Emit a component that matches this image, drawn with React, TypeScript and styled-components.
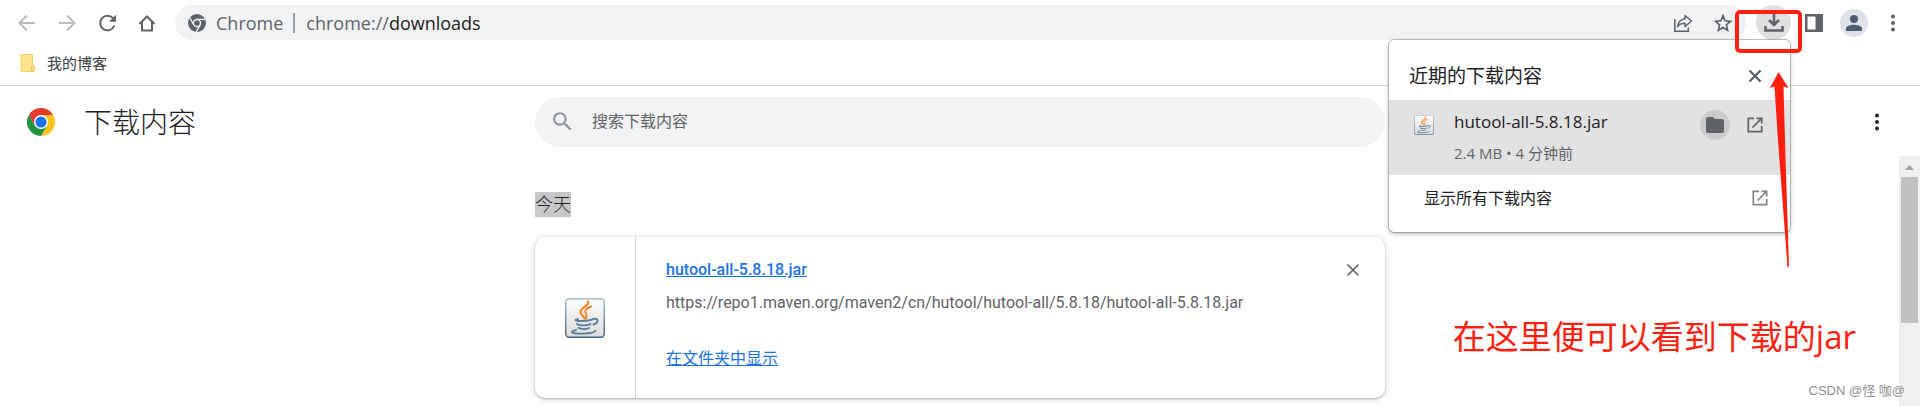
import React from "react";
import styled, { createGlobalStyle, css } from "styled-components";

const ui = `"Open Sans", "Noto Sans CJK SC", sans-serif`;
const web = `Roboto, "Noto Sans CJK SC", sans-serif`;

const GlobalStyle = createGlobalStyle`
  *, *::before, *::after { box-sizing: border-box; }
  body { margin: 0; background: #fff; color: #202124; font-family: ${web}; font-size: 16px; line-height: 24px; }
  button, input { font: inherit; color: inherit; margin: 0; padding: 0; border: 0; background: none; }
  button { cursor: pointer; }
  h1, h2, p { margin: 0; font-weight: 400; }
  svg { display: block; flex: none; }
`;

const Browser = styled.div`
  position: relative;
  display: flex;
  flex-direction: column;
  min-height: 100vh;
  overflow: hidden;
`;

const Toolbar = styled.nav`
  display: flex;
  align-items: center;
  height: 45px;
  padding: 0 10px 0 12px;
  color: #5f6368;
`;

const NavGroup = styled.div`
  display: flex;
  gap: 10px;
`;

const IconButton = styled.button<{ $size?: number; $fill?: string; $tone?: string }>`
  display: flex;
  flex: none;
  align-items: center;
  justify-content: center;
  width: ${(p) => p.$size ?? 30}px;
  height: ${(p) => p.$size ?? 30}px;
  border-radius: 50%;
  background: ${(p) => p.$fill ?? "transparent"};
  color: ${(p) => p.$tone ?? "#5f6368"};
`;

const Omnibox = styled.div`
  display: flex;
  flex: 1;
  align-items: center;
  height: 35px;
  margin: 0 10px 0 13px;
  padding: 0 8px 0 13px;
  border-radius: 18px;
  background: #f1f3f4;
  font: 18px/24px ${ui};
`;

const SiteChip = styled.span`
  margin-left: 10px;
  padding-right: 10px;
  border-right: 2px solid #9aa0a6;
  line-height: 20px;
`;

const Address = styled.a`
  flex: 1;
  margin-left: 11px;
  color: #5f6368;
  text-decoration: none;
  b { color: #202124; font-weight: 400; }
`;

const OmniActions = styled.div`
  display: flex;
  gap: 10px;
`;

const ToolGroup = styled.div`
  display: flex;
  align-items: center;
  gap: 5px;
`;

const Account = styled.div`
  display: flex;
  align-items: center;
  gap: 7px;
  padding-left: 4px;
`;

const Bookmarks = styled.nav`
  display: flex;
  align-items: center;
  height: 41px;
  padding: 0 20px 4px;
  border-bottom: 1px solid #d5d7da;
`;

const Bookmark = styled.button`
  display: flex;
  align-items: center;
  gap: 12px;
  color: #3c4043;
  font: 15px/20px ${ui};
`;

const Page = styled.div`
  display: grid;
  grid-template-columns: 1fr minmax(0, 850px) 1fr;
  flex: 1;
  grid-template-rows: 71px 1fr;
`;

const Brand = styled.header`
  display: flex;
  align-items: center;
  gap: 29px;
  padding-left: 27px;
`;

const Title = styled.h1`
  padding-top: 4px;
  font-size: 28px;
  font-weight: 300;
  line-height: 36px;
`;

const SearchBox = styled.label`
  display: flex;
  align-items: center;
  align-self: center;
  height: 50px;
  padding: 0 15px;
  gap: 17px;
  border-radius: 25px;
  background: #f1f3f4;
  color: #909397;
`;

const SearchInput = styled.input`
  flex: 1;
  min-width: 0;
  outline: 0;
  color: #202124;
  &::placeholder { color: #5f6368; opacity: 1; }
`;

const PageMenu = styled.div`
  display: flex;
  align-items: center;
  justify-content: flex-end;
  padding-right: 28px;
`;

const List = styled.main`
  grid-column: 2;
  padding-top: 35px;
`;

const Day = styled.h2`
  width: fit-content;
  margin-bottom: 20px;
  background: #c8c8c8;
  font-size: 18px;
  font-weight: 300;
  line-height: 25px;
`;

const Card = styled.article`
  display: flex;
  height: 161px;
  border-radius: 10px;
  background: #fff;
  box-shadow: 0 1px 2px rgba(60, 64, 67, 0.35), 0 1px 6px rgba(60, 64, 67, 0.2);
`;

const FileIcon = styled.div`
  display: flex;
  align-items: center;
  justify-content: center;
  width: 101px;
  border-right: 1px solid #d5d7da;
`;

const FileInfo = styled.div`
  display: flex;
  flex: 1;
  flex-direction: column;
  align-items: flex-start;
  padding: 21px 30px;
`;

const FileLink = styled.a<{ $strong?: boolean }>`
  color: #1a73e8;
  ${(p) => p.$strong ? css`font-weight: 500;` : css`margin-top: auto; margin-bottom: 6px;`}
`;

const FileUrl = styled.p`
  margin-top: 9px;
  color: #5f6368;
`;

const CardClose = styled.div`
  padding: 18px 17px;
`;

const Scrollbar = styled.div`
  position: absolute;
  top: 156px;
  right: 0;
  bottom: 0;
  display: flex;
  flex-direction: column;
  align-items: center;
  width: 21px;
  background: #f0f0f0;
  color: #a3a3a3;
`;

const Thumb = styled.div`
  width: 17px;
  height: 146px;
  background: #c1c1c1;
`;

const Popup = styled.section`
  position: absolute;
  top: 40px;
  right: 130px;
  width: 401px;
  height: 192px;
  border-radius: 5px;
  background: #fff;
  box-shadow: 0 0 0 1px rgba(60, 64, 67, 0.3), 0 2px 5px rgba(60, 64, 67, 0.35);
  font-family: ${ui};
`;

const PopupHead = styled.header`
  display: flex;
  align-items: center;
  justify-content: space-between;
  height: 60px;
  padding: 11px 20px 0;
`;

const PopupTitle = styled.h2`
  font-size: 19px;
  line-height: 28px;
`;

const PopupItem = styled.div`
  display: flex;
  height: 75px;
  padding: 10px 20px 0 25px;
  background: #e2e2e2;
`;

const ItemText = styled.div`
  flex: 1;
  margin-left: 20px;
`;

const ItemName = styled.p`
  font-size: 17px;
  line-height: 24px;
`;

const ItemMeta = styled.p`
  margin-top: 9px;
  color: #5f6368;
  font-size: 15px;
  line-height: 20px;
`;

const ItemIcon = styled.div`
  padding-top: 5px;
`;

const ItemActions = styled.div`
  display: flex;
  gap: 10px;
`;

const ShowAll = styled.button`
  display: flex;
  align-items: center;
  justify-content: space-between;
  width: 100%;
  height: 46px;
  padding: 0 15px 0 35px;
  text-align: left;
`;

const Highlight = styled.div`
  position: absolute;
  top: 10px;
  right: 118px;
  width: 67px;
  height: 43px;
  border: 4px solid #ff1f10;
  border-radius: 5px;
  pointer-events: none;
`;

const Arrow = styled.svg`
  position: absolute;
  top: 72px;
  right: 130px;
  pointer-events: none;
`;

const Note = styled.p`
  position: absolute;
  top: 313px;
  right: 64px;
  color: #ff1f10;
  font: 33px/48px ${ui};
`;

const Watermark = styled.p`
  position: absolute;
  right: 15px;
  bottom: 5px;
  color: #8f8f8f;
  font: 13px/20px "Liberation Sans", "Noto Sans CJK SC", sans-serif;
`;

const stroke = { fill: "none", stroke: "currentColor", strokeWidth: 2 };

const BackIcon = ({ flip = false }) => (
  <svg width="20" height="20" viewBox="0 0 20 20" {...stroke}>
    {flip ? <path d="M2 10h15M10 2.500l7.500 7.500-7.500 7.500" /> : <path d="M18 10H3M10 2.500L2.500 10l7.500 7.500" />}
  </svg>
);

const ReloadIcon = () => (
  <svg width="20" height="20" viewBox="0 0 20 20" {...stroke}>
    <path d="M17.300 12.500A7.300 7.300 0 1 1 16 5.200" />
    <path d="M19 1.700v7h-7z" fill="currentColor" stroke="none" />
  </svg>
);

const HomeIcon = () => (
  <svg width="20" height="20" viewBox="0 0 20 20" {...stroke}>
    <path d="M2.500 11L10 3.500l7.500 7.500M5 9v8.500h10V9" />
  </svg>
);

const ChromeMono = () => (
  <svg width="18" height="18" viewBox="0 0 24 24">
    <circle cx="12" cy="12" r="12" fill="#5f6368" />
    <circle cx="12" cy="12" r="4.700" fill="none" stroke="#f1f3f4" strokeWidth="1.800" />
    <path d="M12 7.200h11M7.800 14.400L2.400 5M16.200 14.400L10.800 24" stroke="#f1f3f4" strokeWidth="1.800" />
  </svg>
);

const ChromeLogo = () => (
  <svg width="28" height="28" viewBox="0 0 48 48">
    <path d="M24 12h20.800A24 24 0 0 0 3.200 12l10.400 18z" fill="#e33b2e" />
    <path d="M34.400 30L24 48A24 24 0 0 0 44.800 12H24z" fill="#fcc31e" />
    <path d="M13.600 30L3.200 12A24 24 0 0 0 24 48l10.400-18z" fill="#229342" />
    <circle cx="24" cy="24" r="12" fill="#fff" />
    <circle cx="24" cy="24" r="9.500" fill="#1a73e8" />
  </svg>
);

const ShareIcon = () => (
  <svg width="20" height="20" viewBox="0 0 20 20" {...stroke} strokeWidth="1.500">
    <path d="M1.800 6v12.200h13.500V14.500" />
    <path d="M12 2.500l6.500 5.500-6.500 5.500v-3.300c-3.500 0-5.800 1-7.500 3.500.6-4.500 3.200-7.400 7.500-8z" strokeLinejoin="round" />
  </svg>
);

const StarIcon = () => (
  <svg width="20" height="20" viewBox="0 0 20 20" {...stroke} strokeWidth="1.700">
    <path d="M10 2.800l2.100 5 5.400.500-4.100 3.600 1.200 5.300-4.600-2.800-4.600 2.800 1.200-5.300-4.100-3.600 5.400-.500z" />
  </svg>
);

const DownloadIcon = () => (
  <svg width="20" height="20" viewBox="0 0 20 20" {...stroke} strokeWidth="2.600">
    <path d="M10 0v11M5 7l5 5 5-5M1.500 13v4.500h17V13" />
  </svg>
);

const PanelIcon = () => (
  <svg width="18" height="18" viewBox="0 0 18 18">
    <path d="M0 0h18v18H0zM2.500 2.500v13h8v-13z" fill="currentColor" fillRule="evenodd" />
  </svg>
);

const PersonIcon = () => (
  <svg width="16" height="16" viewBox="0 0 16 16" fill="#4d5b70">
    <circle cx="8" cy="4" r="4" />
    <path d="M0 16v-2.500C0 10.800 5 9.700 8 9.700s8 1.100 8 3.800V16z" />
  </svg>
);

const DotsIcon = () => (
  <svg width="6" height="18" viewBox="0 0 6 18" fill="currentColor">
    <circle cx="3" cy="2.500" r="2" />
    <circle cx="3" cy="9" r="2" />
    <circle cx="3" cy="15.500" r="2" />
  </svg>
);

const FolderMark = () => (
  <svg width="15" height="18" viewBox="0 0 15 18">
    <path d="M1 .5h11.500v11.500h1.500v5.500H1z" fill="#ffe48d" stroke="#f0d264" />
    <path d="M11.500 17v-4l1.500-1.500 1.500 1.500v4z" fill="#ffe48d" stroke="#eccb55" />
  </svg>
);

const SearchIcon = () => (
  <svg width="25" height="25" viewBox="0 0 24 24" fill="currentColor">
    <path d="M15.500 14h-.79l-.28-.27A6.471 6.471 0 0 0 16 9.500 6.500 6.500 0 1 0 9.500 16c1.610 0 3.090-.59 4.230-1.570l.27.28v.79l5 4.990L20.490 19l-4.990-5zm-6 0C7.010 14 5 11.990 5 9.500S7.010 5 9.500 5 14 7.010 14 9.500 11.990 14 9.500 14z" />
  </svg>
);

const CloseIcon = ({ weight = 2 }) => (
  <svg width="14" height="14" viewBox="0 0 14 14" {...stroke} strokeWidth={weight}>
    <path d="M1.500 1.500l11 11M12.500 1.500l-11 11" />
  </svg>
);

const FolderIcon = () => (
  <svg width="18" height="16" viewBox="0 0 18 16" fill="currentColor">
    <path d="M2 0h5l2 2h7a2 2 0 0 1 2 2v10a2 2 0 0 1-2 2H2a2 2 0 0 1-2-2V2a2 2 0 0 1 2-2z" />
  </svg>
);

const OpenIcon = () => (
  <svg width="16" height="16" viewBox="0 0 16 16" {...stroke} strokeWidth="1.700">
    <path d="M7 1.300H1.300v13.400h13.400V9M9.500 1.300h5.200v5.200M14.500 1.500L5.500 10.500" />
  </svg>
);

const JavaIcon = ({ size = 40 }) => (
  <svg width={size} height={size} viewBox="0 0 40 40">
    <defs>
      <linearGradient id="java-face" x1="0" y1="0" x2="0" y2="1">
        <stop offset="0" stopColor="#fdfdfd" />
        <stop offset="1" stopColor="#dcdcdc" />
      </linearGradient>
      <linearGradient id="java-edge" x1="0" y1="0" x2="0" y2="1">
        <stop offset="0" stopColor="#a9bccb" />
        <stop offset="1" stopColor="#3c5f7c" />
      </linearGradient>
    </defs>
    <rect x=".7" y=".7" width="38.600" height="38.600" rx="3.500" fill="url(#java-face)" stroke="url(#java-edge)" strokeWidth="1.400" />
    <g fill="none" stroke="#f0842c" strokeLinecap="round">
      <path d="M23 3.500c1.500 4.500-8 6.500-7.500 11 .2 2.500 3 3.500 4 6" strokeWidth="2.200" />
      <path d="M26 8.500c-4 1.500-6.500 3.500-5.500 6 .8 1.800 2 3 .5 6" strokeWidth="2" />
    </g>
    <g fill="none" stroke="#5c7f9f" strokeLinecap="round" strokeWidth="1.900">
      <path d="M13 21c-8 2 4 3 14 .8M28 21c6-1.500 6 3.800.5 5.500" />
      <path d="M12 25.800c2 2 10 2 13.500.3M13.500 29.800c2 1.700 8 1.700 10.500.2" />
      <path d="M11 32c-9 2.200-2 4 7 3.600 7-.1 12-1.300 12.500-3" />
    </g>
  </svg>
);

const FILE = "hutool-all-5.8.18.jar";

export default function App() {
  return (
    <Browser>
      <GlobalStyle />
      <Toolbar aria-label="浏览器工具栏">
        <NavGroup>
          <IconButton $tone="#babcbe" aria-label="后退"><BackIcon /></IconButton>
          <IconButton $tone="#babcbe" aria-label="前进"><BackIcon flip /></IconButton>
          <IconButton aria-label="重新加载"><ReloadIcon /></IconButton>
          <IconButton aria-label="主页"><HomeIcon /></IconButton>
        </NavGroup>
        <Omnibox>
          <ChromeMono />
          <SiteChip>Chrome</SiteChip>
          <Address href="#downloads">chrome://<b>downloads</b></Address>
          <OmniActions>
            <IconButton aria-label="分享"><ShareIcon /></IconButton>
            <IconButton aria-label="添加书签"><StarIcon /></IconButton>
          </OmniActions>
        </Omnibox>
        <ToolGroup>
          <IconButton $size={35} $fill="#e0e0e0" aria-label="下载"><DownloadIcon /></IconButton>
          <IconButton $size={35} aria-label="侧边栏"><PanelIcon /></IconButton>
          <Account>
            <IconButton $size={28} $fill="#dee1e8" aria-label="个人资料"><PersonIcon /></IconButton>
            <IconButton $size={35} aria-label="菜单"><DotsIcon /></IconButton>
          </Account>
        </ToolGroup>
      </Toolbar>
      <Bookmarks aria-label="书签栏">
        <Bookmark><FolderMark />我的博客</Bookmark>
      </Bookmarks>

      <Page>
        <Brand>
          <ChromeLogo />
          <Title>下载内容</Title>
        </Brand>
        <SearchBox>
          <SearchIcon />
          <SearchInput type="text" placeholder="搜索下载内容" aria-label="搜索下载内容" />
        </SearchBox>
        <PageMenu>
          <IconButton $tone="#202124" aria-label="更多操作"><DotsIcon /></IconButton>
        </PageMenu>
        <List>
          <Day>今天</Day>
          <Card>
            <FileIcon><JavaIcon /></FileIcon>
            <FileInfo>
              <FileLink $strong href="#file">{FILE}</FileLink>
              <FileUrl>https://repo1.maven.org/maven2/cn/hutool/hutool-all/5.8.18/{FILE}</FileUrl>
              <FileLink href="#folder">在文件夹中显示</FileLink>
            </FileInfo>
            <CardClose>
              <IconButton aria-label="从列表中移除"><CloseIcon weight={1.7} /></IconButton>
            </CardClose>
          </Card>
        </List>
      </Page>

      <Scrollbar aria-hidden="true">
        <svg width="21" height="21" viewBox="0 0 21 21" fill="currentColor"><path d="M6 14l4.500-5 4.500 5z" /></svg>
        <Thumb />
      </Scrollbar>

      <Popup aria-label="近期的下载内容">
        <PopupHead>
          <PopupTitle>近期的下载内容</PopupTitle>
          <IconButton aria-label="关闭"><CloseIcon weight={2.4} /></IconButton>
        </PopupHead>
        <PopupItem>
          <ItemIcon><JavaIcon size={20} /></ItemIcon>
          <ItemText>
            <ItemName>{FILE}</ItemName>
            <ItemMeta>2.4 MB • 4 分钟前</ItemMeta>
          </ItemText>
          <ItemActions>
            <IconButton $fill="#cbcbcb" aria-label="在文件夹中显示"><FolderIcon /></IconButton>
            <IconButton aria-label="打开"><OpenIcon /></IconButton>
          </ItemActions>
        </PopupItem>
        <ShowAll>显示所有下载内容<IconButton as="span" $tone="#80868b"><OpenIcon /></IconButton></ShowAll>
      </Popup>

      <Highlight />
      <Arrow width="20" height="196" viewBox="0 0 20 196" fill="#ff1f10">
        <path d="M8.500 0L18.500 16l-5-1.500 1.500 54L19 195h-1.500L8 69 4.500 14.500 0 16z" />
      </Arrow>
      <Note>在这里便可以看到下载的jar</Note>
      <Watermark>CSDN @怪 咖@</Watermark>
    </Browser>
  );
}
